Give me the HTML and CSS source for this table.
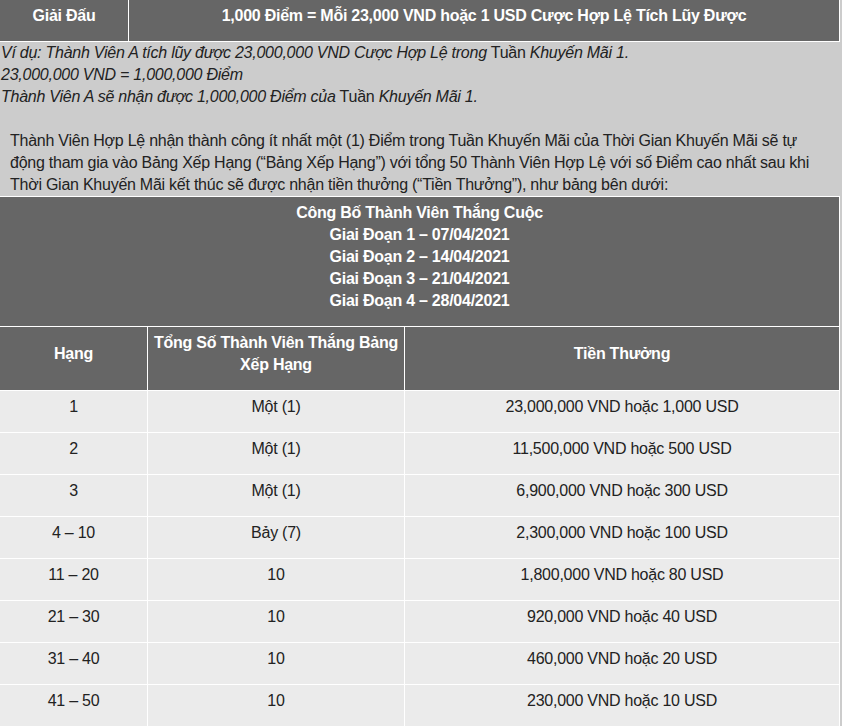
FILE: index.html
```html
<!DOCTYPE html>
<html lang="vi">
<head>
<meta charset="utf-8">
<title>Bảng Xếp Hạng</title>
<link rel="stylesheet" href="styles.css">
</head>
<body>
<div class="wrap">
  <table class="tbl tbl-top">
    <colgroup><col class="c-top1"><col></colgroup>
    <tr>
      <th>Giải Đấu</th>
      <th>1,000 Điểm = Mỗi 23,000 VND hoặc 1 USD Cược Hợp Lệ Tích Lũy Được</th>
    </tr>
  </table>
  <div class="example">
    <div><em>Ví dụ: Thành Viên A tích lũy được 23,000,000 VND Cược Hợp Lệ trong</em> Tuần <em>Khuyến Mãi 1.</em></div>
    <div><em>23,000,000 VND = 1,000,000 Điểm</em></div>
    <div><em>Thành Viên A sẽ nhận được 1,000,000 Điểm của</em> Tuần <em>Khuyến Mãi 1.</em></div>
  </div>
  <p class="para">Thành Viên Hợp Lệ nhận thành công ít nhất một (1) Điểm trong Tuần Khuyến Mãi của Thời Gian Khuyến Mãi sẽ tự động tham gia vào Bảng Xếp Hạng (“Bảng Xếp Hạng”) với tổng 50 Thành Viên Hợp Lệ với số Điểm cao nhất sau khi Thời Gian Khuyến Mãi kết thúc sẽ được nhận tiền thưởng (“Tiền Thưởng”), như bảng bên dưới:</p>
  <table class="tbl tbl-rank">
    <colgroup><col class="c1"><col class="c2"><col></colgroup>
    <tr>
      <th colspan="3">Công Bố Thành Viên Thắng Cuộc<br>Giai Đoạn 1 – 07/04/2021<br>Giai Đoạn 2 – 14/04/2021<br>Giai Đoạn 3 – 21/04/2021<br>Giai Đoạn 4 – 28/04/2021</th>
    </tr>
    <tr>
      <th>Hạng</th>
      <th>Tổng Số Thành Viên Thắng Bảng Xếp Hạng</th>
      <th>Tiền Thưởng</th>
    </tr>
    <tr><td>1</td><td>Một (1)</td><td>23,000,000 VND hoặc 1,000 USD</td></tr>
    <tr><td>2</td><td>Một (1)</td><td>11,500,000 VND hoặc 500 USD</td></tr>
    <tr><td>3</td><td>Một (1)</td><td>6,900,000 VND hoặc 300 USD</td></tr>
    <tr><td>4 – 10</td><td>Bảy (7)</td><td>2,300,000 VND hoặc 100 USD</td></tr>
    <tr><td>11 – 20</td><td>10</td><td>1,800,000 VND hoặc 80 USD</td></tr>
    <tr><td>21 – 30</td><td>10</td><td>920,000 VND hoặc 40 USD</td></tr>
    <tr><td>31 – 40</td><td>10</td><td>460,000 VND hoặc 20 USD</td></tr>
    <tr><td>41 – 50</td><td>10</td><td>230,000 VND hoặc 10 USD</td></tr>
  </table>
</div>
</body>
</html>
```

FILE: styles.css
```css
html, body {
  margin: 0;
  padding: 0;
  background: #cccccc;
}
body {
  font-family: "Liberation Sans", Arial, sans-serif;
  font-size: 16px;
  line-height: 22px;
  letter-spacing: -0.25px;
  color: #222222;
  overflow: hidden;
}
.wrap {
  width: 841px;
  margin: -1px 0 0 -1px;
  background: #cccccc;
}
.tbl {
  width: 841px;
  border-collapse: collapse;
  table-layout: fixed;
}
.tbl th,
.tbl td {
  border: 1px solid #ffffff;
  padding: 5px 2px 14px;
  text-align: center;
  vertical-align: middle;
}
.tbl th {
  background: #666666;
  color: #ffffff;
  font-weight: bold;
}
.tbl td {
  background: #ebebeb;
  color: #222222;
}
.c-top1 { width: 129px; }
.c1 { width: 148px; }
.c2 { width: 257px; }
.example {
  padding-left: 2px;
}
.para {
  margin: 22px 0 0;
  padding: 0 10px 0 11px;
}
```
